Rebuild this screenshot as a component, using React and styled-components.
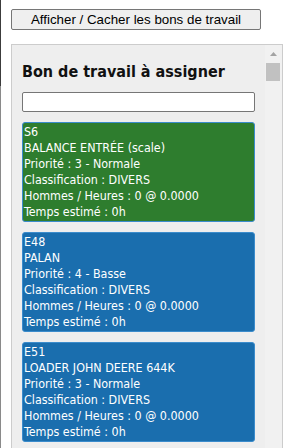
import React from "react";
import styled, { createGlobalStyle } from "styled-components";

const GlobalStyle = createGlobalStyle`
	html, body {
		margin: 0;
		height: 100%;
		overflow: hidden;
	}
	body {
		background:
			linear-gradient(#3c3c3c, #3c3c3c) 0 0 / 1px 86px no-repeat,
			linear-gradient(#8a8a8a, #8a8a8a) 0 86px / 1px 100% no-repeat,
			#fff;
	}
`;

const Page = styled.div`
	padding: 9px 0 0 11px;
`;

const ToggleButton = styled.button`
	display: block;
	width: 250px;
	height: 21px;
	padding: 0;
	font-family: "Liberation Sans", Arial, sans-serif;
	font-size: 13.33px;
	color: #000;
	background: #efefef;
	border: 1px solid #767676;
	border-radius: 2px;
`;

const Panel = styled.div`
	display: flex;
	margin-top: 14px;
	width: 270px;
	height: 420px;
	border: 1px solid #cccccc;
	background: #eeeeee;
	overflow: hidden;
`;

const List = styled.div`
	flex: 1;
	min-width: 0;
	padding: 0 10px;
`;

/* fake scrollbar, headless chrome hides the real one */
const ScrollTrack = styled.div`
	flex: 0 0 17px;
	display: flex;
	flex-direction: column;
	background: #f1f1f1;
`;

const ScrollButton = styled.div`
	height: 17px;
	display: flex;
	align-items: center;
	justify-content: center;
`;

const ScrollThumb = styled.div`
	height: 18px;
	margin: 1px 2px 0 1px;
	background: #c1c1c1;
`;

const Title = styled.h2`
	margin: 16px 0 9px 0;
	font-family: "DejaVu Sans Condensed", "DejaVu Sans", sans-serif;
	font-stretch: condensed;
	font-size: 16px;
	font-weight: bold;
	line-height: 22px;
	color: #111;
`;

const Search = styled.input`
	display: block;
	box-sizing: border-box;
	width: 233px;
	height: 20px;
	margin: 0 0 10px 0;
	border: 1px solid #767676;
	border-radius: 2px;
	background: #fff;
`;

const Card = styled.div`
	box-sizing: border-box;
	width: 233px;
	height: 100px;
	margin-bottom: 10px;
	padding: 1px 0 1px 1px;
	border: 1px solid #3b8ccc;
	border-radius: 3px;
	background: ${(props) => (props.done ? "#2e7d2e" : "#1a6eae")};
	color: #fff;
	font-family: "DejaVu Sans Condensed", "DejaVu Sans", sans-serif;
	font-stretch: condensed;
	font-size: 12.4px;
	line-height: 16px;
	white-space: nowrap;
`;

const Line = styled.div``;

const WORK_ORDERS = [
	{ code: "S6", name: "BALANCE ENTRÉE (scale)", priority: "3 - Normale", green: true },
	{ code: "E48", name: "PALAN", priority: "4 - Basse" },
	{ code: "E51", name: "LOADER JOHN DEERE 644K", priority: "3 - Normale" },
];

export default function App() {
	return (
		<Page>
			<GlobalStyle />
			<ToggleButton>Afficher / Cacher les bons de travail</ToggleButton>
			<Panel>
				<List>
					<Title>Bon de travail à assigner</Title>
					<Search type="text" />
					{WORK_ORDERS.map((wo) => (
						<Card key={wo.code} done={wo.green}>
							<Line>{wo.code}</Line>
							<Line>{wo.name}</Line>
							<Line>Priorité : {wo.priority}</Line>
							<Line>Classification : DIVERS</Line>
							<Line>Hommes / Heures : 0 @ 0.0000</Line>
							<Line>Temps estimé : 0h</Line>
						</Card>
					))}
				</List>
				<ScrollTrack>
					<ScrollButton>
						<svg width="7" height="4" viewBox="0 0 7 4">
							<path d="M0 4 L3.5 0 L7 4 Z" fill="#a3a3a3" />
						</svg>
					</ScrollButton>
					<ScrollThumb />
				</ScrollTrack>
			</Panel>
		</Page>
	);
}
